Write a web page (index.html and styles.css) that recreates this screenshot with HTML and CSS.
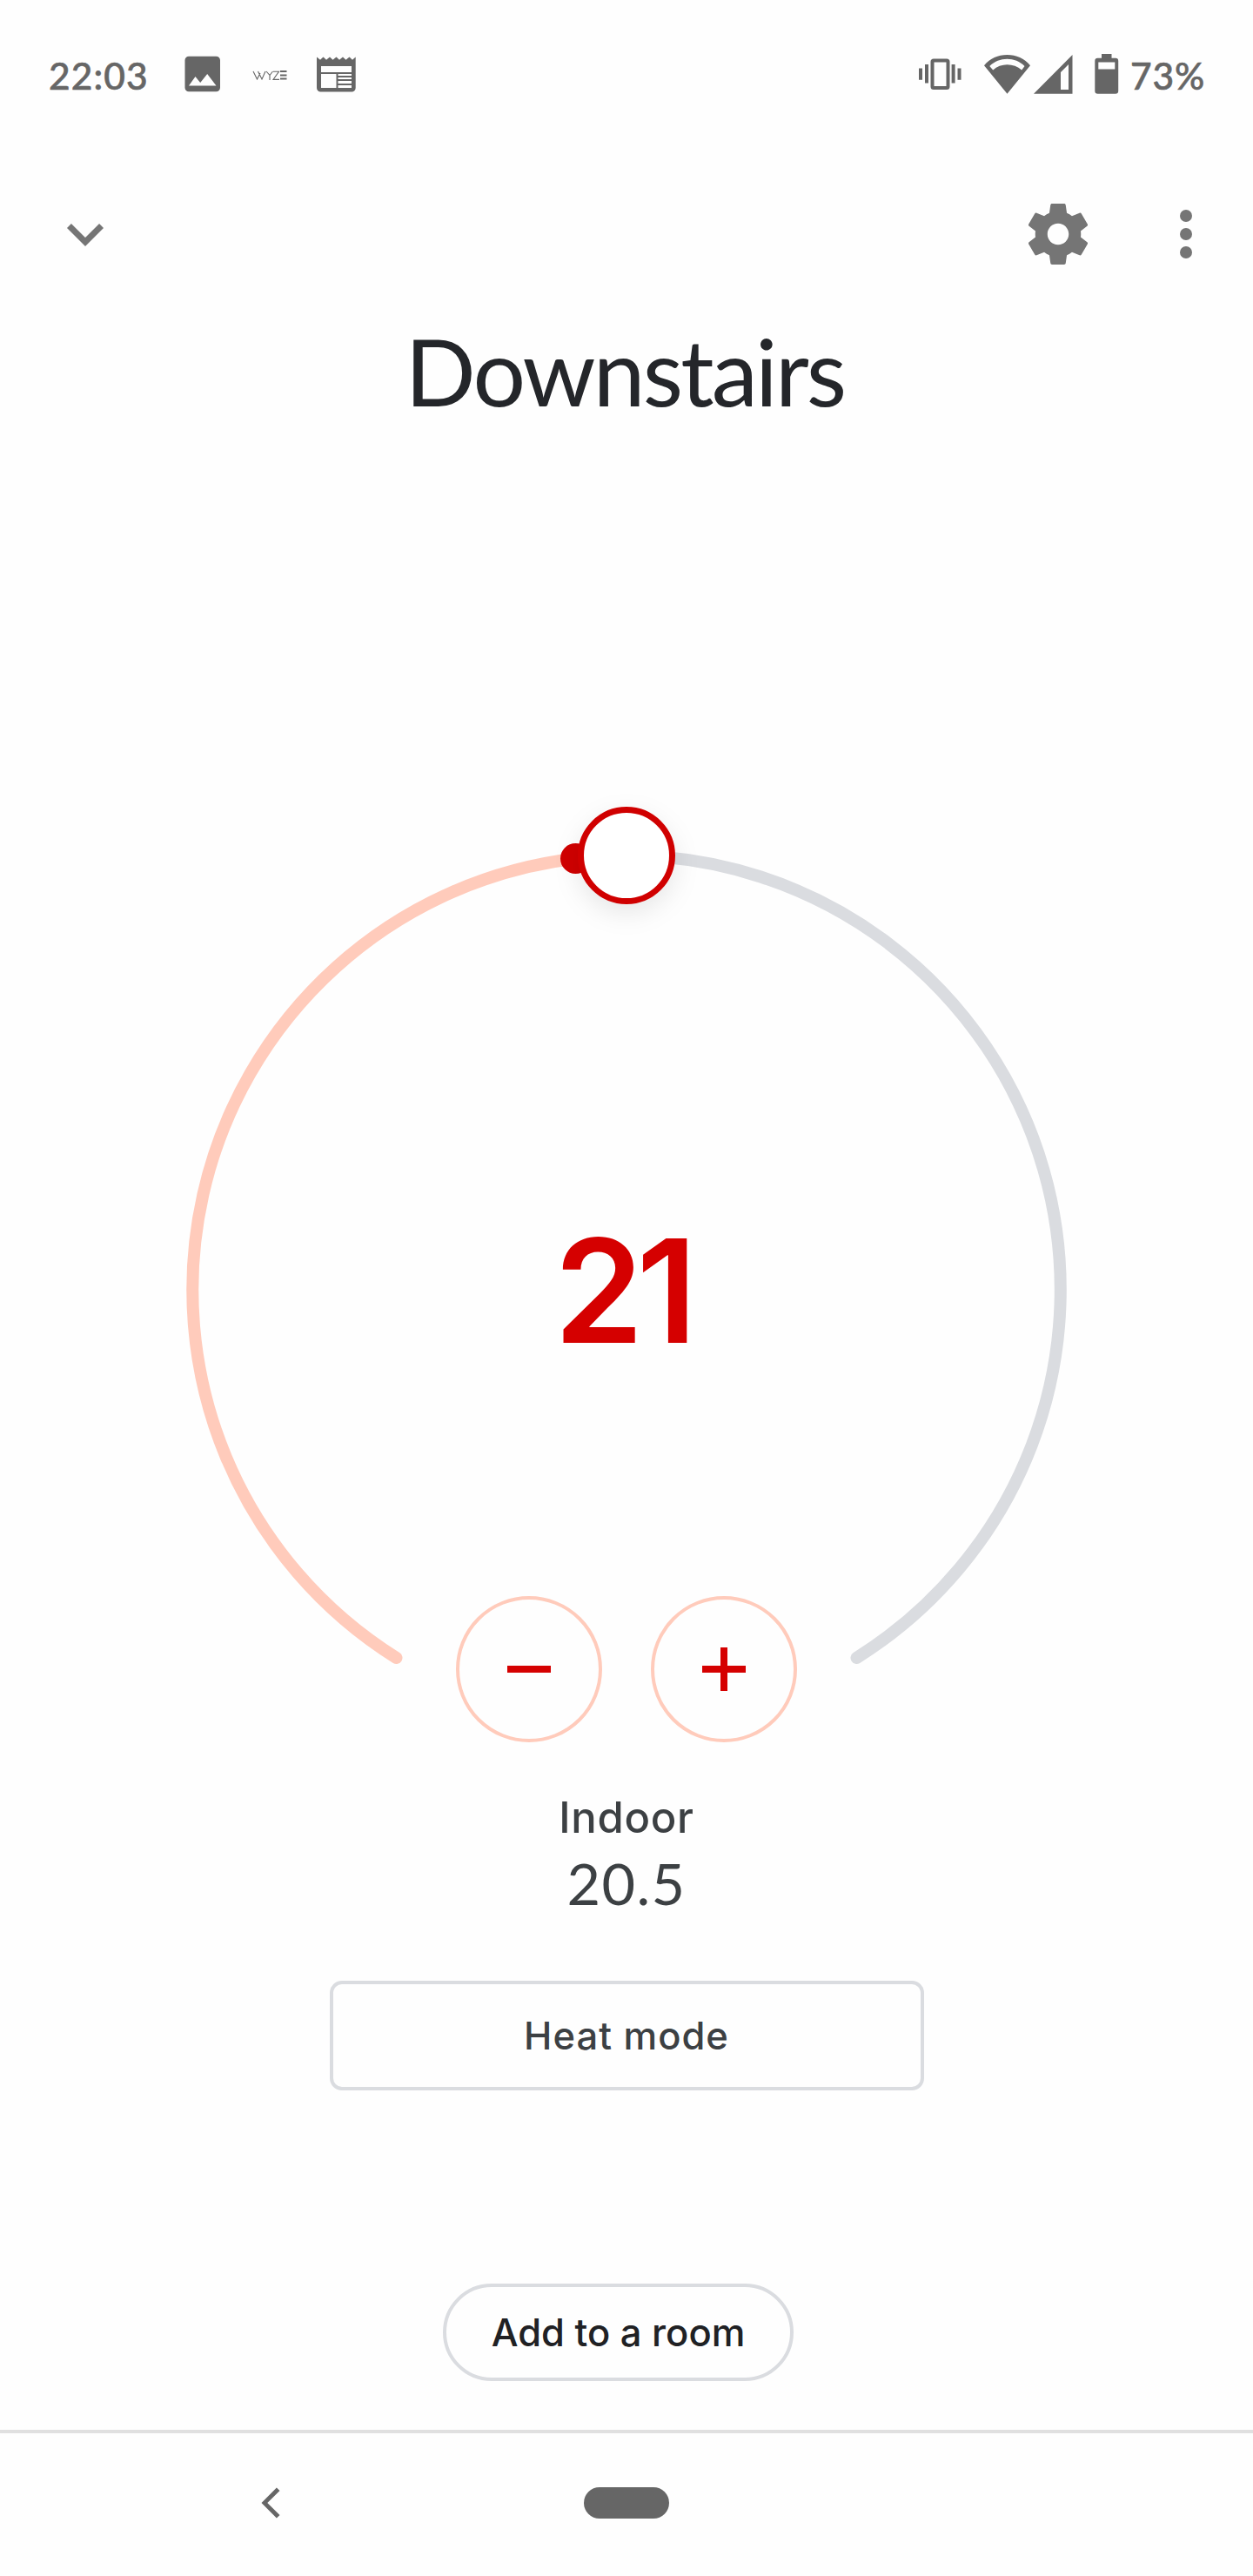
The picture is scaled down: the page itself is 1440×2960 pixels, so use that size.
FILE: index.html
```html
<!DOCTYPE html>
<html lang="en">
<head>
<meta charset="utf-8">
<title>Downstairs</title>
<link rel="stylesheet" href="styles.css">
</head>
<body>
<div class="status-bar">
  <div class="status-left">
    <span class="clock">22:03</span>
    <svg class="icon-photo" width="42" height="42" viewBox="0 0 42 42"><path fill-rule="evenodd" d="M5 .8h31.500a4.500 4.500 0 0 1 4.500 4.500v31.500a4.500 4.500 0 0 1-4.500 4.500h-31.500a4.500 4.500 0 0 1-4.500-4.500v-31.500a4.500 4.500 0 0 1 4.500-4.500zM5 34.500h31.500l-10.300-13.500-8 10-5.700-7z"/></svg>
    <svg class="icon-wyze" width="41" height="12" viewBox="0 0 41 12"><path d="M1 1l4.500 9L9 3M6.500 1l4.500 9L15 1M16 1l4 4.500V11M20 5.500L23.500 1M24 1.200h6.500L24 10.400h7" fill="none" stroke="#666" stroke-width="1.100"/><path d="M32 0h7.500v2H32zM32 4.500h7.500v2H32zM32 8.500h7.500v2H32z"/></svg>
    <svg class="icon-news" width="46" height="42" viewBox="0 0 46 42"><path fill-rule="evenodd" d="M0 1.500L4 4.700 7.500 1.500 11 4.700 15 1.500 18.500 4.700 22.500 1.500 26 4.700 30 1.500 33.500 4.700 37.500 1.500 41 4.700 44.700 1.500V37a4.500 4.500 0 0 1-4.500 4.500H4.500A4.500 4.500 0 0 1 0 37zM5 12v7h35v-7zM5 21v16h17.500V21zM24.500 21v2H40v-2zM24.500 25v2H40v-2zM24.500 29v3H40v-3zM24.500 34v3H40v-3z"/></svg>
  </div>
  <div class="status-right">
    <svg class="icon-vibrate" width="49" height="36" viewBox="0 0 49 36"><path d="M0 11.500h4v13.300H0zM7 7h4v21.500H7zM37.600 7h4v21.500h-4zM44.500 11.500h4v13.300h-4z"/><rect x="15.500" y="2.500" width="18" height="31.500" rx="1.500" fill="none" stroke="#666" stroke-width="4"/></svg>
    <svg class="icon-wifi" width="53" height="45" viewBox="0 0 53 45"><path fill-rule="evenodd" d="M26.500 44.800L0 12.200C7 4 16 0 26.500 0S46 4 53 12.200zM10.200 17.500C19 9.200 34 9.200 43.200 17.500l3.300-4.500C36 2 17 2 6.300 13z"/></svg>
    <svg class="icon-signal" width="45" height="45" viewBox="0 0 45 45"><path fill-rule="evenodd" d="M0 44.700L44.500 0v44.700zM31 20v20h9V11z"/></svg>
    <svg class="icon-battery" width="28" height="46" viewBox="0 0 28 46"><path fill-rule="evenodd" d="M8 0h11.500v4.700H24a3.200 3.200 0 0 1 3.200 3.200v34.600a3.200 3.200 0 0 1-3.200 3.200H3.500a3.200 3.200 0 0 1-3.200-3.200V7.900a3.200 3.200 0 0 1 3.200-3.200H8zM4.300 9.500v8h19v-8z"/></svg>
    <span class="battery-level">73%</span>
  </div>
</div>

<div class="toolbar">
  <svg width="84" height="84" viewBox="0 0 24 24"><path d="M16.590 8.590L12 13.170 7.410 8.590 6 10l6 6 6-6z"/></svg>
  <div class="toolbar-actions">
    <svg width="84" height="84" viewBox="0 0 24 24"><path d="M19.430 12.980c.04-.32.07-.64.07-.98s-.03-.66-.07-.98l2.110-1.650c.19-.15.24-.42.12-.64l-2-3.460c-.12-.22-.39-.3-.61-.22l-2.490 1c-.52-.4-1.080-.73-1.690-.98l-.38-2.650C14.460 2.180 14.250 2 14 2h-4c-.25 0-.46.18-.49.42l-.38 2.650c-.61.25-1.170.59-1.690.98l-2.490-1c-.23-.09-.49 0-.61.22l-2 3.460c-.13.22-.07.49.12.64l2.110 1.650c-.04.32-.07.65-.07.98s.03.66.07.98l-2.110 1.650c-.19.15-.24.42-.12.64l2 3.460c.12.22.39.3.61.22l2.490-1c.52.4 1.080.73 1.690.98l.38 2.650c.03.24.24.42.49.42h4c.25 0 .46-.18.49-.42l.38-2.650c.61-.25 1.170-.59 1.690-.98l2.490 1c.23.09.49 0 .61-.22l2-3.460c.12-.22.07-.49-.12-.64l-2.110-1.650zM12 15.500c-1.930 0-3.500-1.570-3.500-3.500s1.570-3.500 3.500-3.500 3.500 1.570 3.500 3.500-1.570 3.500-3.500 3.500z"/></svg>
    <svg width="84" height="84" viewBox="0 0 24 24"><circle cx="12" cy="6" r="2"/><circle cx="12" cy="12" r="2"/><circle cx="12" cy="18" r="2"/></svg>
  </div>
</div>

<h1 class="title">Downstairs</h1>

<main class="thermostat">
  <div class="dial">
    <svg class="dial-ring" width="1024" height="1082" viewBox="208 920 1024 1082">
      <g fill="none" stroke-width="14" stroke-linecap="round">
        <path stroke="#dadce0" d="M720 983A499 499 0 0 1 984.500 1905"/>
        <path stroke="#ffcbbb" d="M455.500 1905A499 499 0 0 1 661.600 986.500"/>
      </g>
      <circle cx="661.500" cy="986.500" r="17.500" fill="#d00000"/>
      <circle class="knob" cx="720" cy="983" r="52.500" fill="#fff" stroke="#d00000" stroke-width="7"/>
    </svg>
    <div class="target">21</div>
    <div class="steppers">
      <button class="stepper" aria-label="Lower"><svg width="50" height="50" viewBox="0 0 50 50"><path d="M0 21h50v8H0z"/></svg></button>
      <button class="stepper" aria-label="Raise"><svg width="50" height="50" viewBox="0 0 50 50"><path d="M0 21h21V0h8v21h21v8H29v21h-8V29H0z"/></svg></button>
    </div>
  </div>
  <div class="indoor-label">Indoor</div>
  <div class="indoor-value">20.5</div>
  <button class="mode">Heat mode</button>
  <button class="add-room">Add to a room</button>
</main>

<nav class="nav-bar">
  <svg width="22" height="36" viewBox="0 0 22 36"><path d="M17.900.5L21.500 4 7.300 18l14.200 14-3.600 3.500L.5 18z"/></svg>
  <div class="home-pill"></div>
</nav>
</body>
</html>
```
FILE: styles.css
```css
* { box-sizing: border-box; }

body {
  margin: 0;
  width: 1440px;
  height: 2960px;
  display: flex;
  flex-direction: column;
  background: #fefefe;
  color: #3c4043;
  font-family: Lato, "Liberation Sans", sans-serif;
  font-weight: 500;
}

svg { display: block; flex: none; }

button {
  padding: 0;
  background: none;
  color: inherit;
  font: inherit;
}

.status-bar {
  height: 174px;
  padding: 0 0 0 56px;
  display: flex;
  justify-content: space-between;
  color: #666;
  fill: #666;
  font-size: 42.5px;
  letter-spacing: 1.1px;
  line-height: 174px;
  -webkit-text-stroke: 0.6px #666;
}

.status-left, .status-right { display: flex; align-items: flex-start; }
.clock { width: 156px; }
.icon-photo { margin-top: 64px; }
.icon-wyze { margin: 81px 0 0 36px; }
.icon-news { margin: 64px 0 0 33px; }
.status-right { width: 384px; }
.icon-vibrate { margin-top: 67px; }
.icon-wifi { margin: 63px 0 0 26px; }
.icon-signal { margin: 63px 0 0 4px; }
.icon-battery { margin: 62px 0 0 25px; }
.battery-level { margin-left: 13px; letter-spacing: 0.8px; }

.toolbar {
  height: 190px;
  padding: 0 35px 0 56px;
  display: flex;
  align-items: center;
  justify-content: space-between;
  fill: #757575;
}

.toolbar-actions { display: flex; gap: 63px; }

.title {
  margin: 0;
  height: 132px;
  color: #24262a;
  font-size: 107px;
  font-weight: 400;
  letter-spacing: -2.8px;
  line-height: 124px;
  text-align: center;
  text-indent: -4px;
}

.thermostat {
  flex: 1;
  display: flex;
  flex-direction: column;
  align-items: center;
}

.dial {
  display: grid;
  justify-items: center;
  margin-top: 424px;
}

.dial > * { grid-area: 1 / 1; }
.dial-ring { overflow: visible; }
.knob { filter: drop-shadow(0 10px 14px rgba(0, 0, 0, 0.09)); }

.target {
  margin-top: 463px;
  height: 200px;
  color: #d50000;
  font-family: Inter, sans-serif;
  font-size: 165px;
  font-weight: 600;
  letter-spacing: -8px;
  line-height: 200px;
  text-indent: -10px;
}

.steppers {
  align-self: end;
  display: flex;
  gap: 56px;
}

.stepper {
  width: 168px;
  height: 168px;
  display: grid;
  place-items: center;
  border: 4px solid #ffcbbb;
  border-radius: 50%;
  fill: #d50000;
}

.indoor-label {
  margin-top: 57px;
  font-family: Inter, sans-serif;
  font-size: 49px;
  letter-spacing: 0.7px;
  line-height: 60px;
}

.indoor-value {
  margin-top: 4px;
  font-size: 66.5px;
  font-weight: 400;
  letter-spacing: 1.4px;
  line-height: 80px;
}

.mode {
  width: 683px;
  height: 126px;
  margin-top: 73px;
  border: 4px solid #dadce0;
  border-radius: 14px;
  font-family: Inter, sans-serif;
  font-size: 43.5px;
  letter-spacing: 1px;
}

.add-room {
  width: 403px;
  height: 112px;
  margin: 222px 19px 0 0;
  border: 4px solid #dadce0;
  border-radius: 56px;
  color: #202124;
  font-family: Inter, sans-serif;
  font-size: 43.5px;
}

.nav-bar {
  height: 168px;
  padding: 0 0 4px 300px;
  display: flex;
  align-items: center;
  gap: 349px;
  border-top: 4px solid #e0e0e0;
  fill: #666;
}

.home-pill {
  width: 98px;
  height: 36px;
  border-radius: 18px;
  background: #666;
}
```
